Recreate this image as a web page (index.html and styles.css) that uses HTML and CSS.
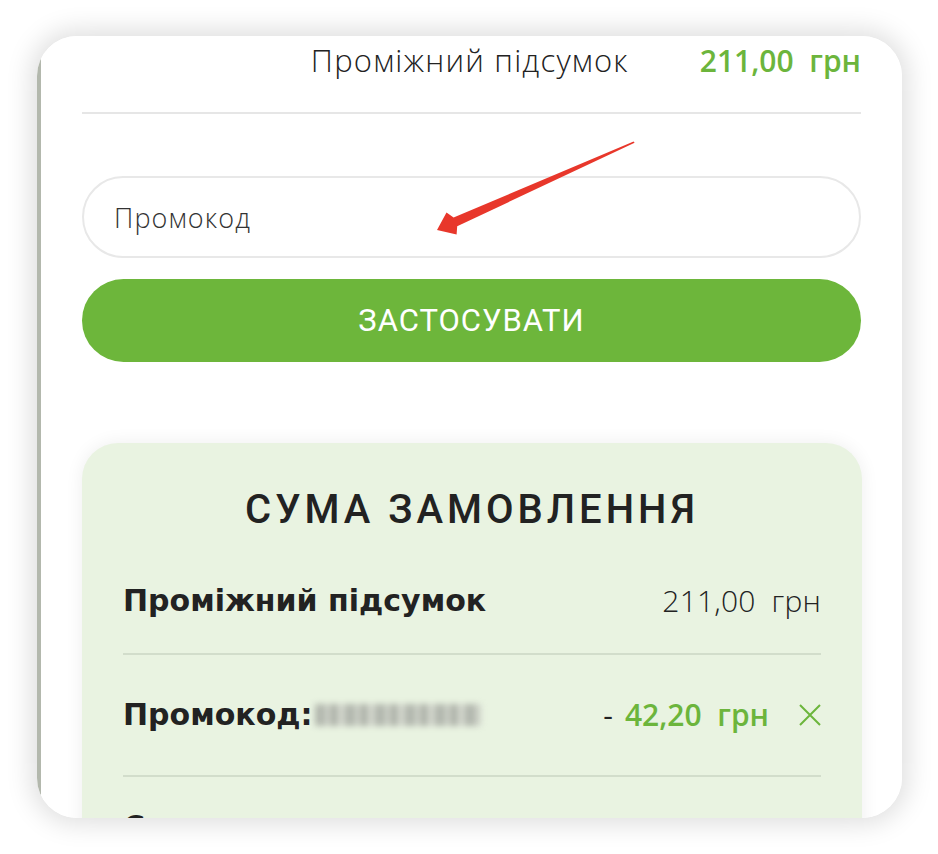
FILE: index.html
```html
<!DOCTYPE html>
<html lang="uk">
<head>
<meta charset="utf-8">
<title>Кошик</title>
<link rel="stylesheet" href="styles.css">
</head>
<body>
<div class="stage">
  <div class="frame">
    <div class="screen">
      <div class="subtotal-top">
        <span class="st-label">Проміжний підсумок</span>
        <span class="st-value">211,00&nbsp; грн</span>
      </div>
      <div class="hr"></div>
      <div class="promo-input">Промокод</div>
      <div class="apply-btn">ЗАСТОСУВАТИ</div>
      <div class="summary">
        <div class="summary-title">СУМА ЗАМОВЛЕННЯ</div>
        <div class="sum-row first">
          <span class="sum-label">Проміжний підсумок</span>
          <span class="sum-value">211,00&nbsp; грн</span>
        </div>
        <div class="sum-row">
          <span class="sum-label">Промокод:<span class="blur"></span></span>
          <span class="discount"><span class="minus">-</span> <span class="disc-val">42,20&nbsp; грн</span>
            <svg class="remove" width="22" height="22" viewBox="0 0 22 22"><path d="M1 1L21 21M21 1L1 21" stroke="#6cb53c" stroke-width="2" fill="none"/></svg>
          </span>
        </div>
        <div class="sum-row last">
          <span class="sum-label">Сума до сплати</span>
        </div>
      </div>
    </div>
  </div>
  <svg class="arrow" width="938" height="854" viewBox="0 0 938 854">
    <polygon points="437,230 446.5,212.5 453.6,217.6 633.6,141.4 634.6,142.8 457.2,226.2 456.6,234.6" fill="#e8372b"/>
  </svg>
</div>
</body>
</html>
```

FILE: styles.css
```css
html, body {
  margin: 0;
  padding: 0;
  background: #ffffff;
}

.stage {
  position: relative;
  width: 938px;
  height: 854px;
  padding: 36px 0 0 37px;
  box-sizing: border-box;
  font-family: "Roboto", "Liberation Sans", sans-serif;
  color: #222222;
}

.frame {
  width: 865px;
  height: 782px;
  border-radius: 40px;
  overflow: hidden;
  box-shadow: 0 0 26px 6px rgba(0, 0, 0, 0.13);
  background: #ffffff;
}

.screen {
  height: 100%;
  box-sizing: border-box;
  border-left: 4px solid #b3b8ad;
  padding: 0 41px 0 41px;
  background: #ffffff;
}

.subtotal-top {
  display: flex;
  justify-content: flex-end;
  align-items: center;
  gap: 71px;
  height: 48px;
}

.st-label {
  font-family: "Open Sans", "Roboto", sans-serif;
  font-size: 31px;
  font-weight: 300;
  letter-spacing: 1.2px;
  color: #222;
}

.st-value {
  font-family: "Open Sans", "Roboto", sans-serif;
  font-size: 30px;
  font-weight: 600;
  color: #6cb53c;
}

.hr {
  height: 2px;
  background: #e6e6e6;
  margin-top: 28px;
}

.promo-input {
  margin-top: 62px;
  height: 82px;
  box-sizing: border-box;
  border: 2px solid #e8e8e8;
  border-radius: 41px;
  display: flex;
  align-items: center;
  padding-left: 30px;
  font-family: "Open Sans", "Roboto", sans-serif;
  font-size: 27px;
  font-weight: 300;
  letter-spacing: 1.1px;
  color: #333;
}

.apply-btn {
  margin-top: 21px;
  height: 83px;
  border-radius: 42px;
  background: #6db63b;
  color: #ffffff;
  display: flex;
  align-items: center;
  justify-content: center;
  font-size: 31px;
  letter-spacing: 1px;
  font-weight: 400;
}

.summary {
  margin-top: 81px;
  width: 780px;
  background: #e9f3e1;
  border-radius: 36px;
  box-shadow: 0 0 18px rgba(0, 0, 0, 0.07);
  padding: 40px 41px 40px;
  box-sizing: border-box;
}

.summary-title {
  text-align: center;
  font-size: 40px;
  line-height: 54px;
  font-weight: 500;
  letter-spacing: 4px;
  color: #222;
  margin-bottom: 43px;
}

.sum-row {
  display: flex;
  justify-content: space-between;
  align-items: center;
  line-height: 42px;
  padding: 39px 0;
  border-bottom: 2px solid #d2ddcb;
}

.sum-row.first {
  padding-top: 0;
  padding-bottom: 31px;
}

.sum-row.last {
  border-bottom: none;
  padding-top: 29px;
}

.sum-label {
  font-family: "DejaVu Sans", "Roboto", sans-serif;
  font-size: 30px;
  font-weight: 700;
  color: #222;
  display: flex;
  align-items: center;
  gap: 1px;
}

.sum-value {
  font-family: "Open Sans", "Roboto", sans-serif;
  font-size: 30px;
  font-weight: 300;
  letter-spacing: 0.2px;
}

.blur {
  display: inline-block;
  width: 166px;
  height: 22px;
  margin-left: 1px;
  background:
    repeating-linear-gradient(90deg, #a9ada5 0 10px, #c9ccc4 10px 16px, #9ea29a 16px 22px, #cfd2ca 22px 30px);
  filter: blur(3px);
  opacity: 0.85;
}

.discount {
  display: flex;
  align-items: center;
  font-family: "Open Sans", "Roboto", sans-serif;
  font-size: 30px;
}

.minus {
  font-weight: 400;
  color: #222;
  margin-right: 12px;
}

.disc-val {
  font-weight: 600;
  letter-spacing: 0;
  color: #6cb53c;
}

.remove {
  margin-left: 30px;
}

.arrow {
  position: absolute;
  left: 0;
  top: 0;
  pointer-events: none;
}
```
